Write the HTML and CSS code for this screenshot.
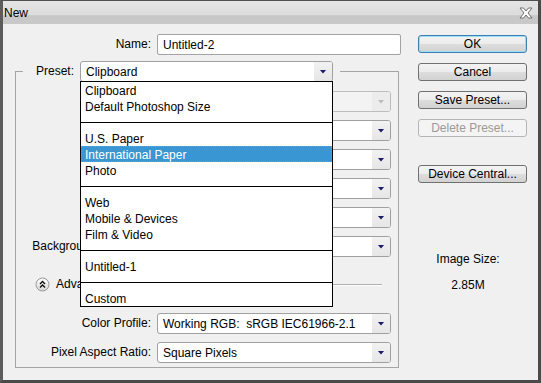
FILE: index.html
```html
<!DOCTYPE html>
<html lang="en">
<head>
  <meta charset="UTF-8">
  <title>New</title>
  <link rel="stylesheet" href="styles.css">
</head>
<body>
  <div class="window">
    <div class="titlebar">
      <span class="title">New</span>
      <svg class="close" width="14" height="12" viewBox="0 0 14 12">
        <polygon points="1,1 4.5,1 7,4 9.5,1 13,1 9,6 13,11 9.5,11 7,8 4.5,11 1,11 5,6" fill="#fff" stroke="#6e6e6e" stroke-width="1" stroke-linejoin="round"/>
      </svg>
    </div>
    <div class="main">
      <div class="form">
        <div class="name-row">
          <span class="label">Name:</span>
          <div class="input">Untitled-2</div>
        </div>
        <fieldset class="group">
          <legend class="preset">
            <span class="label preset-label">Preset:</span>
            <div class="preset-wrap">
              <div class="select"><span class="select-text">Clipboard</span><span class="arrow"></span></div>
              <ul class="menu">
                <li class="item">Clipboard</li>
                <li class="item">Default Photoshop Size</li>
                <li class="sep"></li>
                <li class="item">U.S. Paper</li>
                <li class="item active">International Paper</li>
                <li class="item">Photo</li>
                <li class="sep"></li>
                <li class="item">Web</li>
                <li class="item">Mobile &amp; Devices</li>
                <li class="item">Film &amp; Video</li>
                <li class="sep"></li>
                <li class="item">Untitled-1</li>
                <li class="sep"></li>
                <li class="item">Custom</li>
              </ul>
            </div>
          </legend>
          <div class="group-body">
            <div class="row">
              <span class="label">Size:</span>
              <div class="fields">
                <div class="select disabled"><span class="select-text"></span><span class="arrow"></span></div>
              </div>
            </div>
            <div class="row">
              <span class="label">Width:</span>
              <div class="fields">
                <div class="input small">210</div>
                <div class="select"><span class="select-text">mm</span><span class="arrow"></span></div>
              </div>
            </div>
            <div class="row">
              <span class="label">Height:</span>
              <div class="fields">
                <div class="input small">297</div>
                <div class="select"><span class="select-text">mm</span><span class="arrow"></span></div>
              </div>
            </div>
            <div class="row">
              <span class="label">Resolution:</span>
              <div class="fields">
                <div class="input small">72</div>
                <div class="select"><span class="select-text">pixels/inch</span><span class="arrow"></span></div>
              </div>
            </div>
            <div class="row">
              <span class="label">Color Mode:</span>
              <div class="fields">
                <div class="select mode"><span class="select-text">RGB Color</span><span class="arrow"></span></div>
                <div class="select"><span class="select-text">8 bit</span><span class="arrow"></span></div>
              </div>
            </div>
            <div class="row">
              <span class="label">Background Contents:</span>
              <div class="fields">
                <div class="select"><span class="select-text">White</span><span class="arrow"></span></div>
              </div>
            </div>
            <div class="advanced">
              <svg class="adv-icon" width="15" height="15" viewBox="0 0 15 15">
                <defs>
                  <linearGradient id="advFill" x1="0" y1="0" x2="0" y2="1">
                    <stop offset="0" stop-color="#ffffff"/>
                    <stop offset="1" stop-color="#d6d6d6"/>
                  </linearGradient>
                </defs>
                <circle cx="7.5" cy="7.5" r="6.5" fill="url(#advFill)" stroke="#9a9a9a"/>
                <polyline points="5,7 7.5,4.5 10,7" fill="none" stroke="#111" stroke-width="1.4"/>
                <polyline points="5,10.5 7.5,8 10,10.5" fill="none" stroke="#111" stroke-width="1.4"/>
              </svg>
              <span class="adv-text">Advanced</span>
              <span class="adv-line"></span>
            </div>
            <div class="row profile">
              <span class="label">Color Profile:</span>
              <div class="fields">
                <div class="select"><span class="select-text">Working RGB:&nbsp; sRGB IEC61966-2.1</span><span class="arrow"></span></div>
              </div>
            </div>
            <div class="row">
              <span class="label">Pixel Aspect Ratio:</span>
              <div class="fields">
                <div class="select"><span class="select-text">Square Pixels</span><span class="arrow"></span></div>
              </div>
            </div>
          </div>
        </fieldset>
      </div>
      <div class="side">
        <button class="btn default">OK</button>
        <button class="btn">Cancel</button>
        <button class="btn">Save Preset...</button>
        <button class="btn" disabled>Delete Preset...</button>
        <button class="btn device">Device Central...</button>
        <div class="size-label">Image Size:</div>
        <div class="size-value">2.85M</div>
      </div>
    </div>
  </div>
</body>
</html>
```

FILE: styles.css
```css
body {
  margin: 0;
  padding: 0;
  font-family: 'Liberation Sans', Arial, sans-serif;
  font-size: 12px;
  color: #000;
  background: #f0f0f0;
}
.window {
  width: 541px;
  height: 383px;
  box-sizing: border-box;
  background: #f0f0f0;
  border-top: 1px solid #505050;
  border-left: 3px solid #5c5c5c;
  border-right: 3px solid #4a4a4a;
  border-bottom: 3px solid #4a4a4a;
  overflow: hidden;
}
.titlebar {
  height: 23px;
  line-height: 24px;
  padding-left: 1px;
  display: flex;
  justify-content: space-between;
  align-items: flex-start;
  background: linear-gradient(#e4e4e4 0, #dcdcdc 60%, #c7c7c7 64%, #c9c9c9 100%);
}
.close {
  margin: 6px 5px 0 0;
}
.main {
  display: flex;
  padding-top: 10px;
}
.form {
  width: 398px;
}
.label {
  line-height: 21px;
  text-align: right;
  white-space: nowrap;
}
.name-row {
  display: grid;
  grid-template-columns: 148px 244px;
  column-gap: 6px;
}
.input {
  height: 21px;
  box-sizing: border-box;
  border: 1px solid #a3a3a3;
  border-radius: 2px;
  background: #fff;
  padding-left: 5px;
  line-height: 20px;
  white-space: nowrap;
  overflow: hidden;
}
.input.small { width: 80px; flex: none; }
.group {
  margin: 6px 0 0 12px;
  padding: 0 7px 4px 0;
  width: 384px;
  box-sizing: border-box;
  border: 1px solid #a5a5a5;
  min-width: 0;
}
.preset {
  margin: 0 0 -4px 7px;
  padding: 0 7px 0 0;
  display: flex;
  column-gap: 6px;
}
.preset-label {
  width: 51px;
}
.preset-wrap {
  position: relative;
  width: 253px;
}
.select {
  height: 21px;
  box-sizing: border-box;
  border: 1px solid #a0a0a0;
  border-radius: 3px;
  background: #fff;
  display: flex;
  flex: 1;
  min-width: 0;
}
.select.mode { flex: none; width: 94px; }
.select-text {
  flex: 1;
  padding-left: 5px;
  line-height: 20px;
  white-space: nowrap;
  overflow: hidden;
}
.arrow {
  width: 18px;
  display: flex;
  align-items: center;
  justify-content: center;
  background: linear-gradient(#f2f2f2, #e6e6e6);
  border-radius: 0 2px 2px 0;
}
.arrow::after {
  content: "";
  width: 7px;
  height: 4px;
  background: #1b1b6a;
  clip-path: polygon(0 0, 100% 0, 50% 100%);
}
.select.disabled { background: #f3f3f3; border-color: #bdbdbd; }
.select.disabled .arrow { background: #ececec; }
.select.disabled .arrow::after { background: #bcbcbc; }
.menu {
  position: absolute;
  top: 20px;
  left: 0;
  z-index: 10;
  width: 253px;
  box-sizing: border-box;
  margin: 0;
  padding: 0;
  list-style: none;
  background: #fff;
  border: 1px solid #000;
}
.item {
  height: 16px;
  line-height: 18px;
  padding-left: 4px;
  white-space: nowrap;
  overflow: hidden;
}
.item.active {
  background: #3a95d3;
  color: #fff;
  outline: 1px dotted #d8843f;
  outline-offset: -1px;
}
.sep {
  height: 16px;
  display: flex;
  align-items: center;
}
.sep::after {
  content: "";
  flex: 1;
  height: 1px;
  margin-top: 1px;
  background: #000;
}
.group-body {
  display: flex;
  flex-direction: column;
  row-gap: 8px;
  padding-top: 13px;
}
.row {
  display: grid;
  grid-template-columns: 135px 234px;
  column-gap: 6px;
}
.fields {
  display: flex;
  column-gap: 6px;
}
.advanced {
  display: flex;
  align-items: center;
  height: 15px;
  margin-top: 12px;
  padding-left: 19px;
  padding-right: 9px;
}
.adv-text {
  margin-left: 6px;
  line-height: 15px;
}
.adv-line {
  flex: 1;
  height: 1px;
  margin-left: 8px;
  margin-top: -1px;
  background: #b0b0b0;
  box-shadow: 0 1px 0 #fff;
}
.row.profile {
  margin-top: 13px;
}
.side {
  margin-left: 17px;
  width: 109px;
  padding-top: 1px;
  display: flex;
  flex-direction: column;
  row-gap: 10px;
}
.btn {
  height: 18px;
  box-sizing: border-box;
  padding: 0;
  font-family: 'Liberation Sans', Arial, sans-serif;
  font-size: 12px;
  line-height: 16px;
  color: #000;
  border: 1px solid #707070;
  border-radius: 3px;
  background: linear-gradient(#f3f3f3 0, #ececec 50%, #dddddd 51%, #d2d2d2 100%);
}
.btn.default {
  border-color: #3c7fb1;
  box-shadow: inset 0 0 0 1px #9fdcf5;
}
.btn:disabled {
  color: #9a9a9a;
  border-color: #b5b5b5;
  background: #f4f4f4;
}
.btn.device {
  margin-top: 18px;
}
.size-label {
  margin-top: 59px;
  line-height: 14px;
  text-align: center;
  padding-right: 9px;
}
.size-value {
  margin-top: 2px;
  line-height: 14px;
  text-align: center;
  padding-right: 9px;
}
```
